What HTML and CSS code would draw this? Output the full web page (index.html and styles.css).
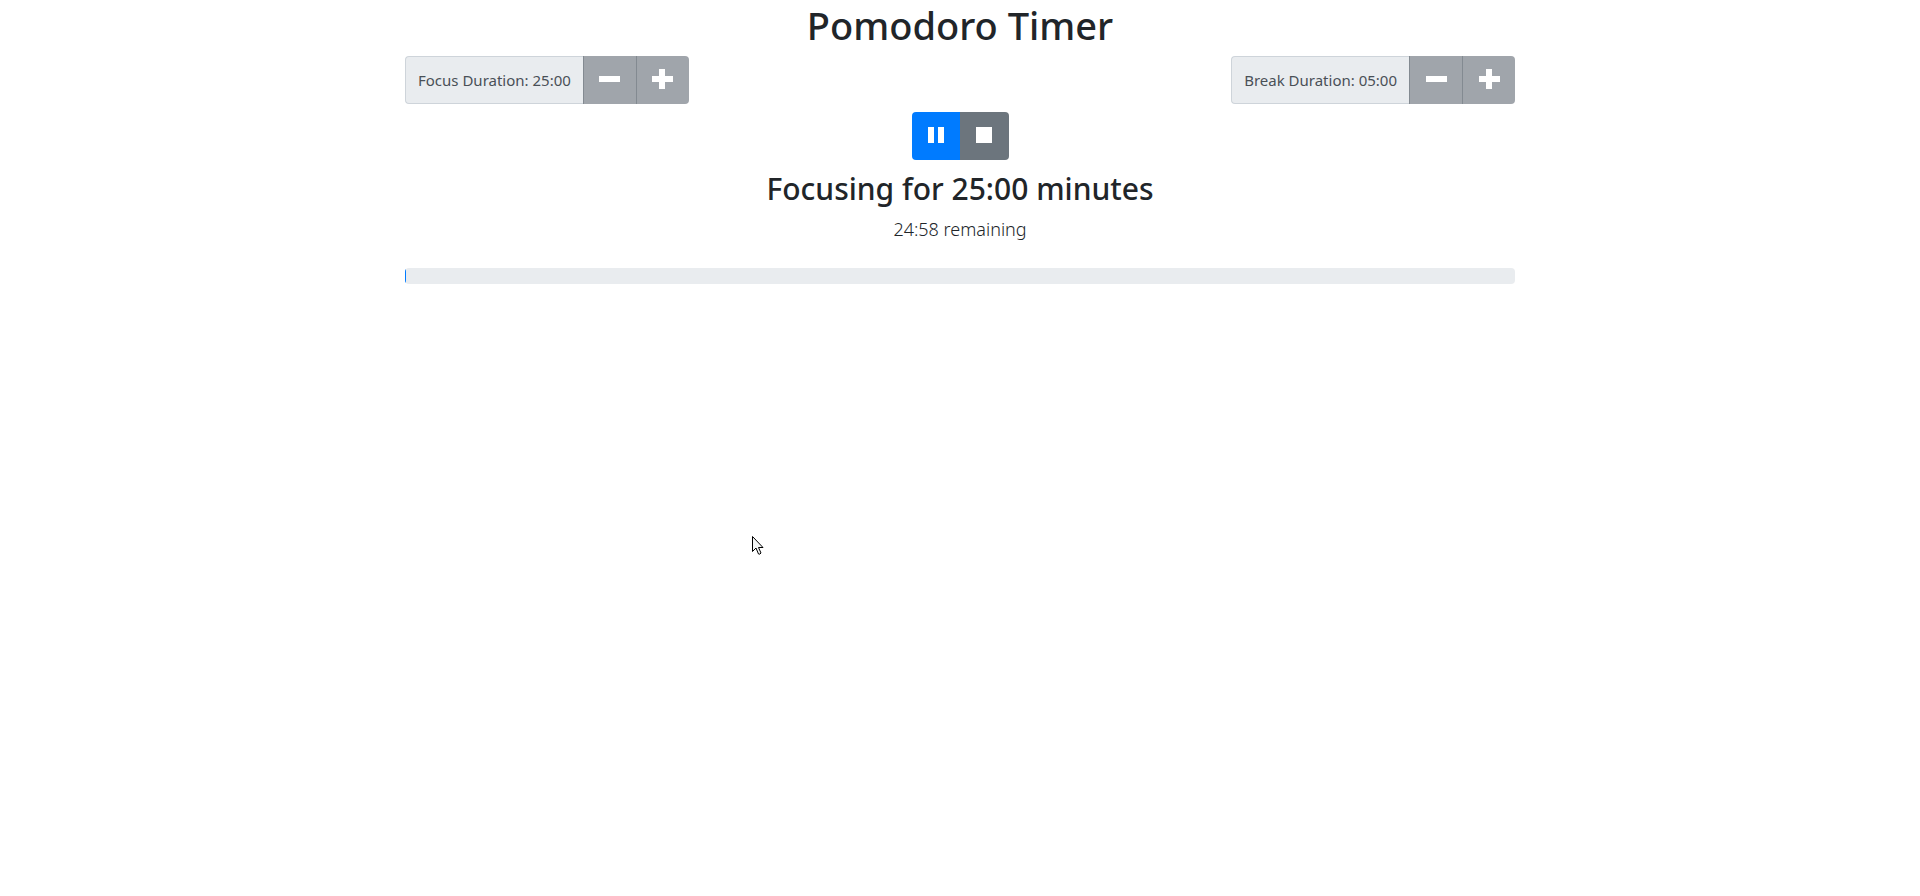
FILE: index.html
```html
<!DOCTYPE html>
<html lang="en">
<head>
<meta charset="utf-8">
<meta name="viewport" content="width=device-width, initial-scale=1">
<title>Pomodoro Timer</title>
<link rel="stylesheet" href="styles.css">
</head>
<body>
<main class="container">
  <h1 class="title">Pomodoro Timer</h1>
  <div class="durations">
    <div class="duration" role="group" aria-labelledby="focus-label">
      <span class="duration-label" id="focus-label">Focus Duration: 25:00</span>
      <button class="btn btn-step" type="button" aria-label="Decrease focus duration" disabled>
        <svg class="icon-step" viewBox="0 0 21 21" aria-hidden="true"><path d="M0 7h21v6H0z"/></svg>
      </button>
      <button class="btn btn-step" type="button" aria-label="Increase focus duration" disabled>
        <svg class="icon-step" viewBox="0 0 21 21" aria-hidden="true"><path d="M7 0h6v7h8v6h-8v7H7v-7H0V7h7z"/></svg>
      </button>
    </div>
    <div class="duration" role="group" aria-labelledby="break-label">
      <span class="duration-label" id="break-label">Break Duration: 05:00</span>
      <button class="btn btn-step" type="button" aria-label="Decrease break duration" disabled>
        <svg class="icon-step" viewBox="0 0 21 21" aria-hidden="true"><path d="M0 7h21v6H0z"/></svg>
      </button>
      <button class="btn btn-step" type="button" aria-label="Increase break duration" disabled>
        <svg class="icon-step" viewBox="0 0 21 21" aria-hidden="true"><path d="M7 0h6v7h8v6h-8v7H7v-7H0V7h7z"/></svg>
      </button>
    </div>
  </div>
  <div class="controls" role="group" aria-label="Timer controls">
    <button class="btn btn-pause" type="button" aria-label="Pause">
      <svg class="icon-media" viewBox="0 0 16 16" aria-hidden="true"><path d="M0 0h6v16H0zM10 0h6v16h-6z"/></svg>
    </button>
    <button class="btn btn-stop" type="button" aria-label="Stop">
      <svg class="icon-media" viewBox="0 0 16 16" aria-hidden="true"><path d="M0 0h16v16H0z"/></svg>
    </button>
  </div>
  <h2 class="session">Focusing for 25:00 minutes</h2>
  <p class="remaining">24:58 remaining</p>
  <div class="progress" role="progressbar" aria-label="Session progress" aria-valuemin="0" aria-valuemax="100" aria-valuenow="0.13">
    <div class="progress-bar" style="width: 0.13%"></div>
  </div>
</main>
<svg class="cursor" viewBox="0 0 12 20" aria-hidden="true"><path d="M.5.5v15l3.500-3.500 2.500 6q1.500.8 2.500-1l-2.500-5.500h4.500z"/></svg>
</body>
</html>
```
FILE: styles.css
```css
*, *::before, *::after { box-sizing: border-box; }

body {
  margin: 0;
  background: #fff;
  color: #212529;
  font-family: "Segoe UI", "Noto Sans", "Open Sans", sans-serif;
  font-size: 16px;
  line-height: 24px;
}

.container {
  max-width: 1140px;
  margin: 0 auto;
  padding: 0 15px;
  text-align: center;
}

.title {
  margin: 0 0 6px;
  font-size: 38px;
  font-weight: 500;
  line-height: 50px;
}

.durations {
  display: flex;
  flex-wrap: wrap;
  justify-content: space-between;
  gap: 8px;
}

.duration { display: flex; height: 48px; }

.duration-label {
  display: flex;
  align-items: center;
  padding: 0 12px;
  border: 1px solid #ced4da;
  border-right: 0;
  border-radius: 4px 0 0 4px;
  background: #e9ecef;
  color: #495057;
  font-size: 15px;
}

.btn {
  display: flex;
  align-items: center;
  justify-content: center;
  height: 48px;
  padding: 0;
  border: 0;
  color: #fff;
  cursor: pointer;
}

.btn:last-child { border-radius: 0 4px 4px 0; }

.btn-step {
  width: 53px;
  padding-bottom: 2px;
  border-left: 1px solid #838a91;
  background: #a0a5ab;
  cursor: default;
}

.icon-step { width: 21px; height: 21px; fill: currentColor; }

.controls {
  display: flex;
  justify-content: center;
  margin: 8px 0;
}

.btn-pause {
  width: 48px;
  border-radius: 4px 0 0 4px;
  background: #007bff;
}

.btn-stop { width: 49px; background: #6c757d; }

.icon-media { width: 16px; height: 16px; margin-bottom: 2px; fill: currentColor; }

.session {
  margin: 0 0 4px;
  font-size: 30px;
  font-weight: 500;
  line-height: 42px;
}

.remaining {
  margin: 0 0 24px;
  font-size: 18px;
  font-weight: 300;
  line-height: 30px;
}

.progress {
  height: 16px;
  overflow: hidden;
  border-radius: 4px;
  background: #e9ecef;
}

.progress-bar { height: 100%; background: #007bff; }

.cursor {
  position: absolute;
  top: 536px;
  left: 752px;
  width: 12px;
  height: 20px;
  fill: #f4f6f6;
  stroke: #000;
}
```
